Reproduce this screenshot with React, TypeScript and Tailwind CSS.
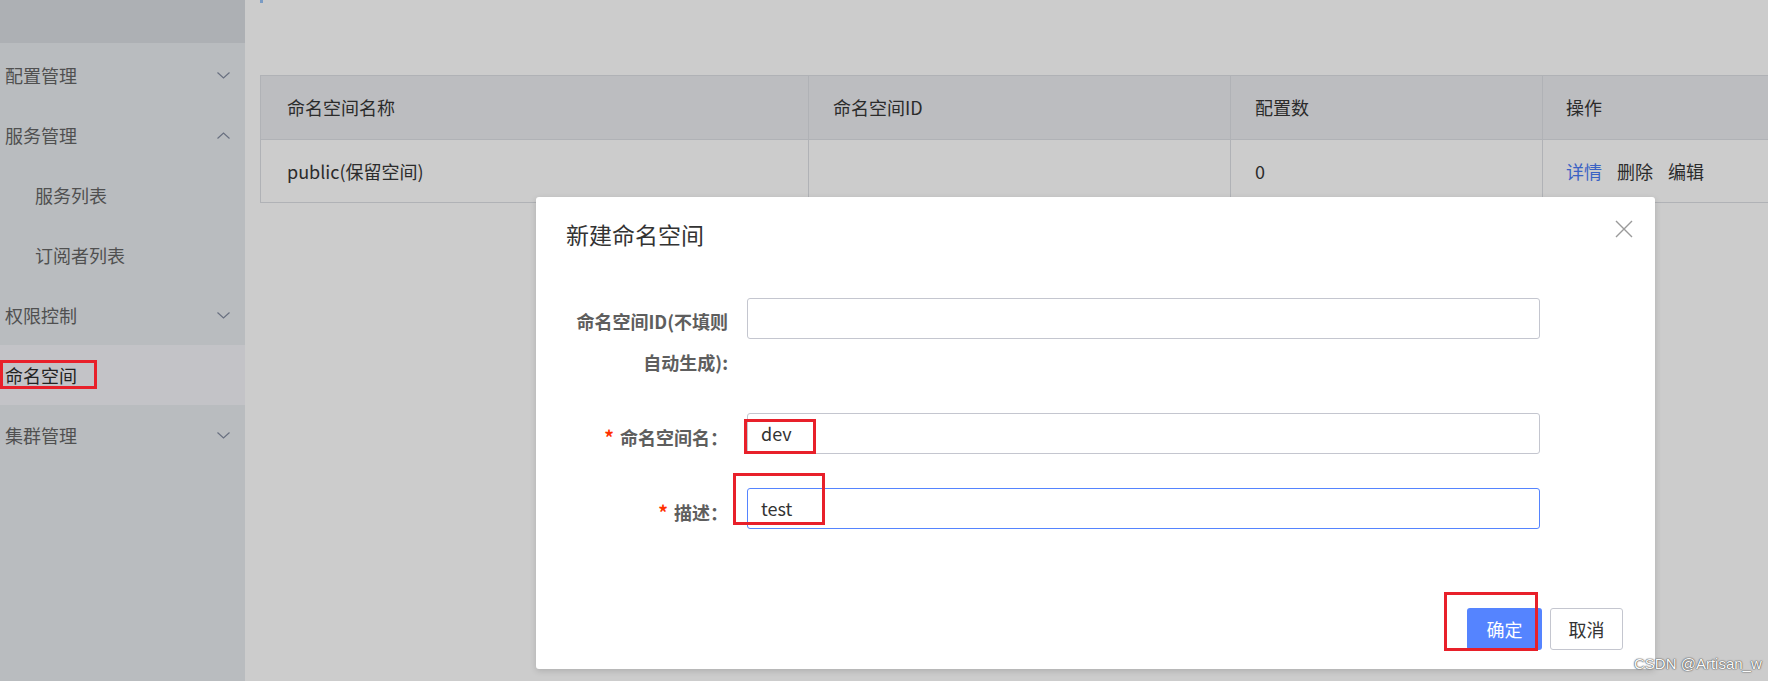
import React from "react";

type MenuItem = {
  label: string;
  chevron?: "up" | "down";
  sub?: boolean;
  active?: boolean;
};

const menu: MenuItem[] = [
  { label: "配置管理", chevron: "down" },
  { label: "服务管理", chevron: "up" },
  { label: "服务列表", sub: true },
  { label: "订阅者列表", sub: true },
  { label: "权限控制", chevron: "down" },
  { label: "命名空间", active: true },
  { label: "集群管理", chevron: "down" },
];

function Chevron({ dir }: { dir: "up" | "down" }) {
  return (
    <svg width="13" height="7" viewBox="0 0 13 7" fill="none">
      <polyline
        points={dir === "down" ? "0.5,0.5 6.5,6 12.5,0.5" : "0.5,6.5 6.5,1 12.5,6.5"}
        stroke="#697080"
        strokeWidth="1.2"
      />
    </svg>
  );
}

function Sidebar() {
  return (
    <aside className="flex w-[245px] shrink-0 flex-col bg-[#b9bcbf]">
      <div className="h-[43px] bg-[#adb0b4]" />
      <div className="mt-[2px] flex flex-col">
        {menu.map((m) => (
          <div
            key={m.label}
            className={
              "relative flex h-[60px] items-center justify-between pr-[15px] text-[18px] " +
              (m.sub ? "pl-[35px] " : "pl-[5px] ") +
              (m.active ? "bg-[#c3c3c7] text-[#222222]" : "text-[#505050]")
            }
          >
            <span className="leading-[24px]">{m.label}</span>
            {m.chevron && <Chevron dir={m.chevron} />}
            {m.active && (
              <div className="absolute left-0 top-[15px] h-[29px] w-[97px] border-[3px] border-[#e8202a]" />
            )}
          </div>
        ))}
      </div>
    </aside>
  );
}

function NamespaceTable() {
  const cols = "grid grid-cols-[547px_422px_312px_260px]";
  return (
    <div className="ml-[15px] mt-[72px] w-[1541px] border border-[#b0b2b6] text-[18px] text-[#2b2b2b]">
      <div className={cols + " h-[64px] border-b border-[#b0b2b6] bg-[#bcbdc0]"}>
        <div className="flex items-center pl-[26px]">命名空间名称</div>
        <div className="flex items-center border-l border-[#b0b2b6] pl-[24px]">命名空间ID</div>
        <div className="flex items-center border-l border-[#b0b2b6] pl-[24px]">配置数</div>
        <div className="flex items-center border-l border-[#b0b2b6] pl-[23px]">操作</div>
      </div>
      <div className={cols + " h-[62px]"}>
        <div className="flex items-center pl-[26px]">public(保留空间)</div>
        <div className="border-l border-[#b0b2b6]" />
        <div className="flex items-center border-l border-[#b0b2b6] pl-[24px]">0</div>
        <div className="flex items-center gap-[15px] border-l border-[#b0b2b6] pl-[23px]">
          <span className="text-[#3b62c4]">详情</span>
          <span>删除</span>
          <span>编辑</span>
        </div>
      </div>
    </div>
  );
}

function Field({
  label,
  required,
  value,
  focused,
  children,
}: {
  label: React.ReactNode;
  required?: boolean;
  value?: string;
  focused?: boolean;
  children?: React.ReactNode;
}) {
  return (
    <div className="grid grid-cols-[192px_793px] gap-x-[19px]">
      <div className="pt-[3px] text-right text-[18px] font-bold leading-[41px] text-[#5e5e5e]">
        {required && <span className="mr-[6px] text-[19px] text-[#ff3000]">*</span>}
        {label}
      </div>
      <div className="relative">
        <div
          className={
            "flex h-[41px] items-center rounded-[3px] border bg-white pl-[13px] text-[18px] text-[#333333] " +
            (focused ? "border-[#5584ff]" : "border-[#c4c6cf]")
          }
        >
          {value}
        </div>
        {children}
      </div>
    </div>
  );
}

function Dialog() {
  return (
    <div className="absolute left-[536px] top-[197px] flex h-[472px] w-[1119px] flex-col rounded-[3px] bg-white shadow-[0_2px_6px_rgba(0,0,0,0.15)]">
      <div className="flex h-[74px] items-center justify-between pl-[30px] pr-[22px]">
        <h2 className="text-[23px] font-normal text-[#333333]">新建命名空间</h2>
        <svg width="18" height="18" viewBox="0 0 18 18" className="-mt-[10px]">
          <path d="M1 1L17 17M17 1L1 17" stroke="#9a9a9a" strokeWidth="1.4" />
        </svg>
      </div>

      <div className="flex flex-col pt-[27px]">
        <Field
          label={
            <>
              命名空间ID(不填则
              <br />
              自动生成):
            </>
          }
        />
        <div className="mt-[30px]">
          <Field label="命名空间名：" required value="dev">
            <div className="absolute -left-[3px] top-[6px] h-[35px] w-[72px] border-[3px] border-[#e8202a]" />
          </Field>
        </div>
        <div className="mt-[30px]">
          <Field label="描述：" required value="test" focused>
            <div className="absolute -left-[14px] -top-[15px] h-[52px] w-[92px] border-[3px] border-[#e8202a]" />
          </Field>
        </div>
      </div>

      <div className="mt-auto flex justify-end gap-[8px] pb-[19px] pr-[32px]">
        <div className="relative">
          <button className="flex h-[42px] w-[75px] items-center justify-center rounded-[3px] bg-[#5584ff] text-[18px] text-white">
            确定
          </button>
          <div className="absolute -left-[23px] -top-[16px] h-[59px] w-[94px] border-[3px] border-[#e8202a]" />
        </div>
        <button className="flex h-[42px] w-[73px] items-center justify-center rounded-[3px] border border-[#c4c6cf] bg-white text-[18px] text-[#333333]">
          取消
        </button>
      </div>
    </div>
  );
}

export default function App() {
  return (
    <div className="relative flex h-[681px] w-[1768px] overflow-hidden font-['Noto_Sans_CJK_SC','Noto_Sans',sans-serif]">
      <Sidebar />
      <main className="flex flex-1 flex-col overflow-hidden bg-[#cccccc]">
        <div className="ml-[15px] h-[3px] w-[3px] bg-[#7a9bc4]" />
        <NamespaceTable />
      </main>
      <Dialog />
      <div className="absolute left-[1634px] top-[653px] font-['Liberation_Sans',sans-serif] text-[15px] text-[#fafafa] [text-shadow:0_0_1px_#555,0_0_1px_#555,0_0_2px_#777]">
        CSDN @Artisan_w
      </div>
    </div>
  );
}
